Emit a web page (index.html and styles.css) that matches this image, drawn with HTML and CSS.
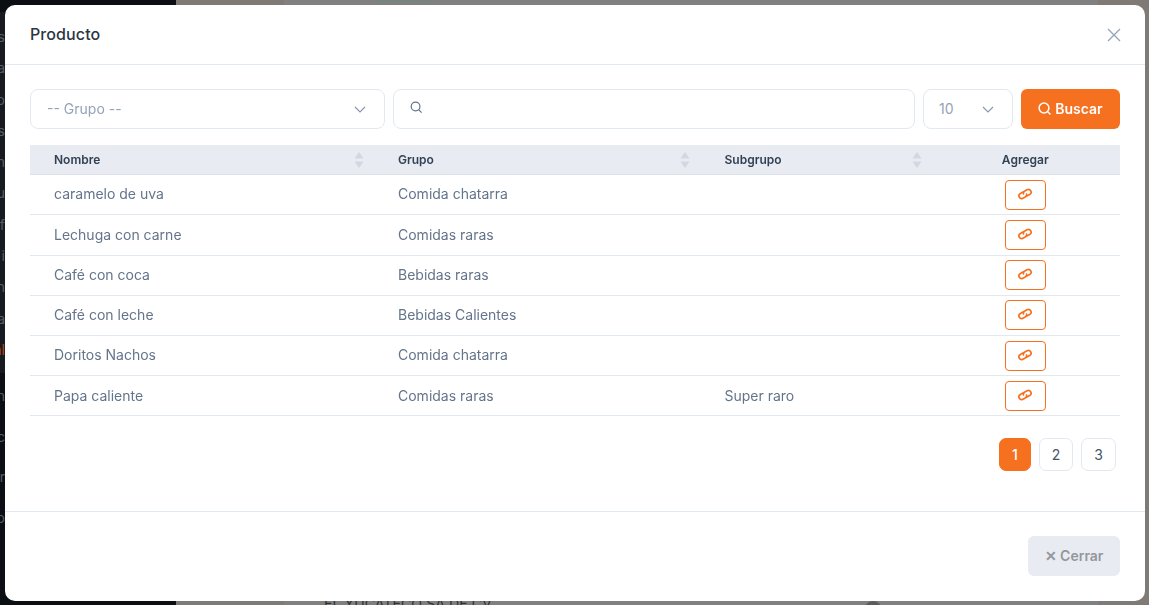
FILE: index.html
```html
<!DOCTYPE html>
<html lang="es">
<head>
<meta charset="utf-8">
<title>Producto</title>
<link rel="stylesheet" href="styles.css">
</head>
<body>
<svg class="defs" aria-hidden="true">
  <symbol id="chain" viewBox="0 0 16 14">
    <g transform="rotate(-28 8 7)">
      <path d="M7.800 4.300H4.200a2.700 2.700 0 0 0 0 5.400h2.600a2.700 2.700 0 0 0 2.500-1.800"/>
      <path d="M8.200 9.700h3.600a2.700 2.700 0 0 0 0-5.400H9.200a2.700 2.700 0 0 0-2.500 1.800"/>
    </g>
  </symbol>
  <symbol id="updown" viewBox="0 0 10 16">
    <path d="M5 0l4.500 6.500h-9zM5 16L.5 9.500h9z"/>
  </symbol>
</svg>

<div class="backdrop">
  <aside class="side">
    <div class="side-top">
      <span>as</span><span>a</span><span>o</span><span>as</span><span>n</span><span>u</span><span>f</span><span>i</span><span>n</span><span>a</span><span class="side-active">ál</span>
    </div>
    <div class="side-bottom">
      <span>n</span><span>c</span><span>or</span><span>o</span>
    </div>
  </aside>
  <div class="page-a"></div>
  <div class="page-b">
    <div class="pill"></div>
    <div class="company">EL YUCATECO SA DE CV</div>
    <div class="avatar"></div>
  </div>
  <div class="page-c"></div>
</div>

<section class="modal">
  <header class="modal-head">
    <h2 class="modal-title">Producto</h2>
    <svg class="close-icon" viewBox="0 0 14 14" aria-hidden="true"><path d="M1 1l12 12M13 1L1 13"/></svg>
  </header>

  <div class="modal-body">
    <div class="toolbar">
      <div class="field field-group">
        <span class="field-text">-- Grupo --</span>
        <svg class="chev" viewBox="0 0 12 7" aria-hidden="true"><path d="M1 1l5 5 5-5"/></svg>
      </div>
      <div class="field field-search">
        <svg class="search-icon" viewBox="0 0 14 14" aria-hidden="true"><circle cx="6" cy="6" r="4.700"/><path d="M9.500 9.500l3 3"/></svg>
      </div>
      <div class="field field-size">
        <span class="field-text">10</span>
        <svg class="chev" viewBox="0 0 12 7" aria-hidden="true"><path d="M1 1l5 5 5-5"/></svg>
      </div>
      <button class="btn-search" type="button">
        <svg class="search-icon-w" viewBox="0 0 14 14" aria-hidden="true"><circle cx="6" cy="6" r="4.900"/><path d="M9.500 9.500l3 3"/></svg>
        Buscar
      </button>
    </div>

    <table class="grid">
      <colgroup><col class="c1"><col class="c2"><col class="c3"><col class="c4"></colgroup>
      <thead>
        <tr>
          <th><div class="th-in">Nombre<svg class="sort"><use href="#updown"/></svg></div></th>
          <th><div class="th-in">Grupo<svg class="sort"><use href="#updown"/></svg></div></th>
          <th><div class="th-in">Subgrupo<svg class="sort"><use href="#updown"/></svg></div></th>
          <th class="center">Agregar</th>
        </tr>
      </thead>
      <tbody>
        <tr><td>caramelo de uva</td><td>Comida chatarra</td><td></td><td class="center"><button class="btn-link" type="button"><svg class="link-icon"><use href="#chain"/></svg></button></td></tr>
        <tr><td>Lechuga con carne</td><td>Comidas raras</td><td></td><td class="center"><button class="btn-link" type="button"><svg class="link-icon"><use href="#chain"/></svg></button></td></tr>
        <tr><td>Café con coca</td><td>Bebidas raras</td><td></td><td class="center"><button class="btn-link" type="button"><svg class="link-icon"><use href="#chain"/></svg></button></td></tr>
        <tr><td>Café con leche</td><td>Bebidas Calientes</td><td></td><td class="center"><button class="btn-link" type="button"><svg class="link-icon"><use href="#chain"/></svg></button></td></tr>
        <tr><td>Doritos Nachos</td><td>Comida chatarra</td><td></td><td class="center"><button class="btn-link" type="button"><svg class="link-icon"><use href="#chain"/></svg></button></td></tr>
        <tr><td>Papa caliente</td><td>Comidas raras</td><td>Super raro</td><td class="center"><button class="btn-link" type="button"><svg class="link-icon"><use href="#chain"/></svg></button></td></tr>
      </tbody>
    </table>

    <nav class="pager">
      <a class="page active">1</a>
      <a class="page p2">2</a>
      <a class="page p3">3</a>
    </nav>
  </div>

  <footer class="modal-foot">
    <button class="btn-close" type="button">✕ Cerrar</button>
  </footer>
</section>
</body>
</html>
```
FILE: styles.css
```css
* { box-sizing: border-box; }
html, body { margin: 0; height: 100%; overflow: hidden; }
body {
  font-family: Inter, "Liberation Sans", sans-serif;
  font-size: 14px;
  color: #64748b;
  background: #808080;
}
.defs { position: absolute; width: 0; height: 0; }

/* page dimmed behind the dialog */
.backdrop { position: fixed; inset: 0; display: flex; }
.side { width: 176px; background: #0b0e12; position: relative; overflow: hidden; }
.side-top {
  position: absolute; left: 0; top: 12px; width: 176px; height: 361px;
  background: #171a20; padding-top: 9px;
}
.side-top span, .side-bottom span {
  display: block; width: 5px; height: 31.300px; line-height: 31.300px;
  overflow: hidden; direction: rtl; color: #555c68; font-size: 14px;
}
.side-top .side-active { color: #a8481c; }
.side-bottom { position: absolute; left: 0; top: 376px; }
.side-bottom span { height: 40.500px; line-height: 40.500px; }
.page-a { width: 108px; background: #7f7a75; }
.page-b { flex: 1; background: #808080; position: relative; overflow: hidden; }
.page-c { width: 51px; background: #7f7a75; }
.pill {
  position: absolute; left: 92px; top: -6px; width: 54px; height: 7px;
  border-radius: 3px; background: #6b8a7a;
}
.company {
  position: absolute; left: 40px; top: 595px; white-space: nowrap;
  color: #2e3238; font-size: 14px; line-height: 17px; letter-spacing: .1px;
}
.avatar {
  position: absolute; left: 581px; top: 601px; width: 16px; height: 16px;
  border-radius: 50%; background: #5c5c5c;
}

/* dialog */
.modal {
  position: fixed; left: 5px; top: 5px; width: 1140px; height: 596px;
  background: #fff; border-radius: 10px;
  display: flex; flex-direction: column;
}
.modal-head {
  height: 60px; flex: none; border-bottom: 1px solid #e2e8f0;
  display: flex; align-items: center; justify-content: space-between;
  padding: 0 25px 1px;
}
.modal-title { margin: 0; font-size: 16px; font-weight: 500; color: #2b3544; letter-spacing: .1px; }
.close-icon {
  width: 14px; height: 14px; margin: 2px -1px 0 0;
  fill: none; stroke: #94a3b8; stroke-width: 1.300;
}

.modal-body { flex: 1; padding: 24px 25px 0; }
.toolbar { display: flex; gap: 8px; height: 40px; }
.field {
  border: 1px solid #e2e8f0; border-radius: 8px; background: #fff;
  display: flex; align-items: center; justify-content: space-between;
  color: #94a3b8; font-size: 14px;
}
.field-text { margin-top: -1px; }
.field-group { width: 355px; padding: 0 18px 0 16px; }
.field-search { flex: 1; padding-left: 16px; justify-content: flex-start; }
.field-size { width: 90px; padding: 0 18px 0 15px; }
.chev { width: 12px; height: 7px; fill: none; stroke: #8a98ad; stroke-width: 1.200; }
.search-icon { width: 13px; height: 13px; margin-top: -4px; fill: none; stroke: #64748b; stroke-width: 1.300; }
.btn-search {
  width: 99px; border: 0; border-radius: 6px; background: #f6711f; color: #fff;
  font: 600 14px Inter, "Liberation Sans", sans-serif;
  display: flex; align-items: center; justify-content: center; gap: 3px; padding: 0 0 1px;
}
.search-icon-w { width: 14px; height: 14px; fill: none; stroke: #fff; stroke-width: 1.500; }

.grid {
  width: 1090px; margin-top: 16px;
  border-collapse: separate; border-spacing: 0; table-layout: fixed;
}
.c1 { width: 344px; }
.c2 { width: 326.500px; }
.c3 { width: 232px; }
.c4 { width: 187.500px; }
.grid th {
  height: 30px; padding: 0 10px 0 24px; background: #e8ebf2;
  border-bottom: 1px solid #dde2ea; text-align: left;
  font-size: 12px; font-weight: 600; color: #334155;
}
.grid th + th { padding-right: 11px; }
.th-in { display: flex; align-items: center; justify-content: space-between; }
.sort { width: 10px; height: 16px; fill: #d3d8e0; }
.grid th.center { text-align: center; padding: 0 2px 0 0; }
.grid td {
  height: 40.250px; padding: 0 0 1.500px 24px; border-bottom: 1px solid #e2e8f0;
  font-size: 14px; color: #64748b; white-space: nowrap;
}
.grid tr:last-child td { height: 40px; }
.grid td.center { text-align: center; padding: 0 2px 0 0; }
.btn-link {
  display: inline-flex; align-items: center; justify-content: center;
  width: 41px; height: 30px; padding: 0; vertical-align: middle;
  border: 1px solid #f6711f; border-radius: 4px; background: #fff;
}
.link-icon {
  width: 16px; height: 14px; margin: -2px 1px 0 0;
  fill: none; stroke: #f6711f; stroke-width: 1.700; stroke-linecap: round;
}

.pager { display: flex; justify-content: flex-end; gap: 8px; margin-top: 21.750px; padding-right: 4px; }
.page {
  height: 33px; width: 34px; border: 1px solid #e2e8f0; border-radius: 7px;
  display: flex; align-items: center; justify-content: center;
  font-size: 14px; color: #475569; background: #fff;
}
.page.active { width: 32px; background: #f6711f; border-color: #f6711f; color: #fff; font-weight: 500; }
.page.p3 { width: 35px; }

.modal-foot {
  height: 90px; flex: none; border-top: 1px solid #e2e8f0;
  display: flex; justify-content: flex-end; align-items: flex-start;
  padding: 24px 25px 0;
}
.btn-close {
  width: 92px; height: 40px; border: 0; border-radius: 6px; background: #e8ebf2;
  color: #94979c; font: 600 14px Inter, "Liberation Sans", sans-serif; padding: 0 0 2px;
}
```
